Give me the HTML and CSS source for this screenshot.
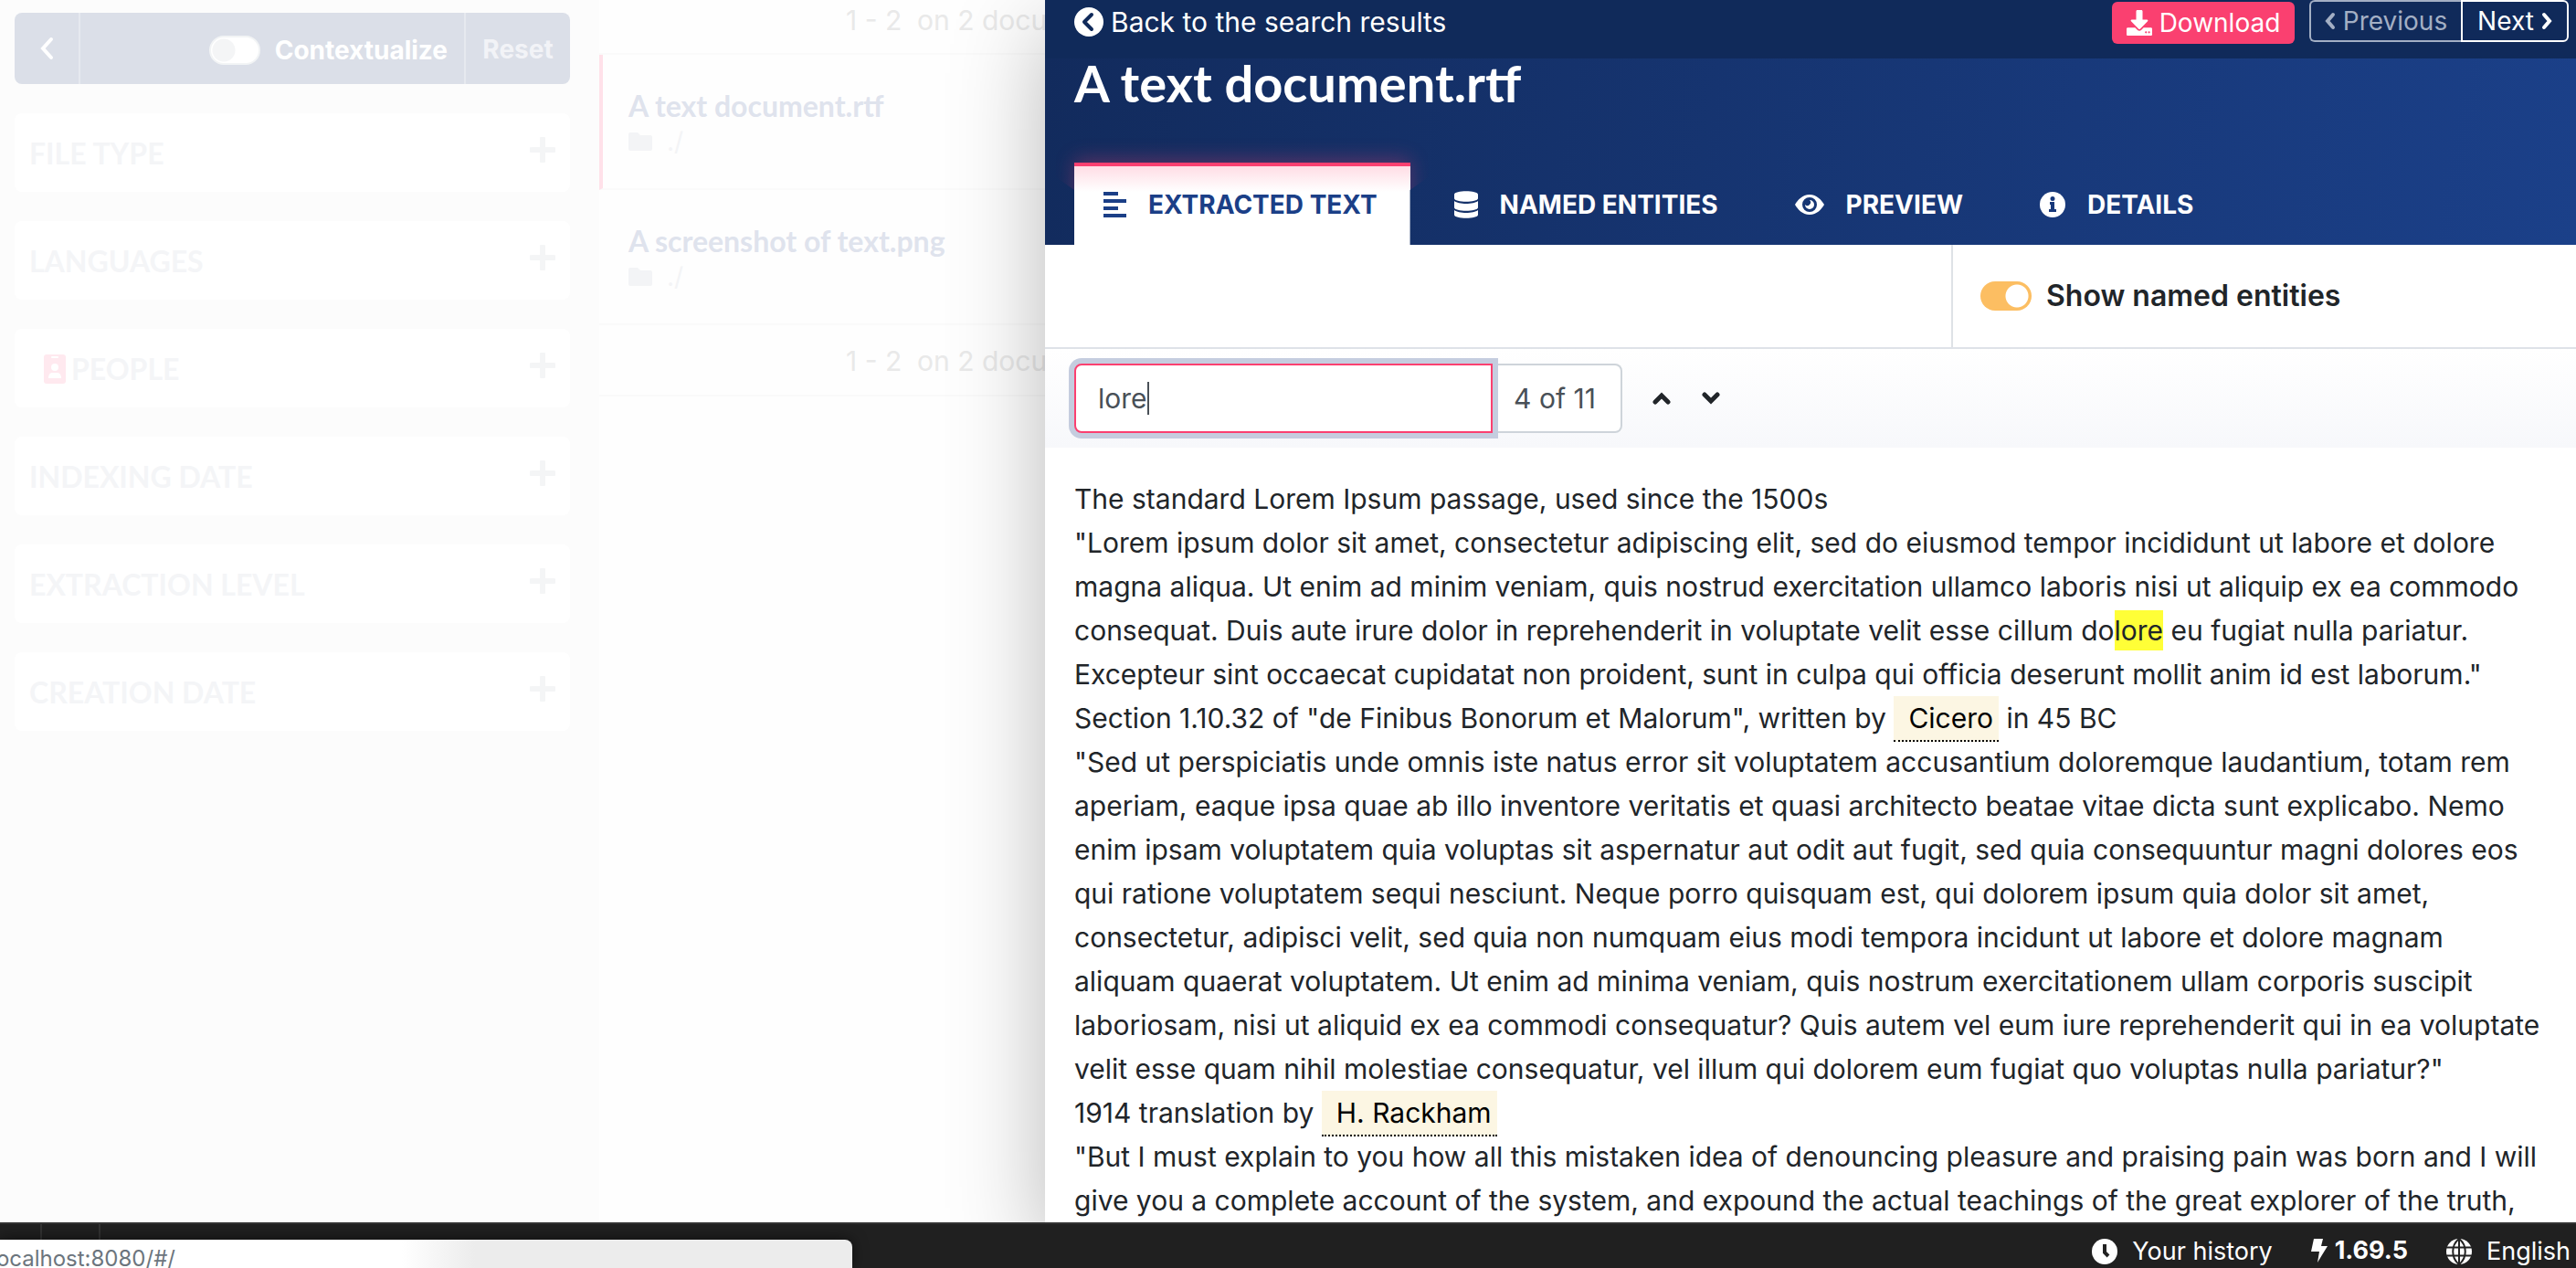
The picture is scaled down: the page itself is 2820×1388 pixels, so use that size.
FILE: index.html
```html
<!DOCTYPE html>
<html lang="en">
<head>
<meta charset="utf-8">
<meta name="viewport" content="width=device-width, initial-scale=1">
<title>A text document.rtf</title>
<link rel="stylesheet" href="styles.css">
</head>
<body>
<div class="workspace">
  <aside class="filters">
    <div class="filters-toolbar">
      <button class="toolbar-back" type="button" aria-label="Hide filters">
        <svg width="16" height="26" viewBox="0 0 16 26"><path d="M13 3 4 13l9 10" fill="none" stroke="currentColor" stroke-width="4" stroke-linecap="round"/></svg>
      </button>
      <label class="toolbar-context"><input type="checkbox" class="switch switch-off">Contextualize</label>
      <button class="toolbar-reset" type="button">Reset</button>
    </div>
    <button class="filter" type="button"><span>FILE TYPE</span><svg class="plus" viewBox="0 0 28 28"><path d="M14 2v24M2 14h24"/></svg></button>
    <button class="filter" type="button"><span>LANGUAGES</span><svg class="plus" viewBox="0 0 28 28"><path d="M14 2v24M2 14h24"/></svg></button>
    <button class="filter" type="button"><span class="filter-people"><svg width="24" height="32" viewBox="0 0 24 32"><rect width="24" height="32" rx="3" fill="#ffe9ef"/><rect x="8" y="2" width="8" height="2" rx="1" fill="#fff"/><circle cx="12" cy="14" r="4" fill="#fff"/><path d="M5 26c0-4 2-6 4-6h6c2 0 4 2 4 6z" fill="#fff"/></svg>PEOPLE</span><svg class="plus" viewBox="0 0 28 28"><path d="M14 2v24M2 14h24"/></svg></button>
    <button class="filter" type="button"><span>INDEXING DATE</span><svg class="plus" viewBox="0 0 28 28"><path d="M14 2v24M2 14h24"/></svg></button>
    <button class="filter" type="button"><span>EXTRACTION LEVEL</span><svg class="plus" viewBox="0 0 28 28"><path d="M14 2v24M2 14h24"/></svg></button>
    <button class="filter" type="button"><span>CREATION DATE</span><svg class="plus" viewBox="0 0 28 28"><path d="M14 2v24M2 14h24"/></svg></button>
  </aside>

  <section class="results">
    <p class="range range-top">1 - 2&nbsp; on 2 documents</p>
    <article class="result result-active">
      <a class="result-title" href="#doc1">A text document.rtf</a>
      <p class="result-path"><svg width="26" height="20" viewBox="0 0 26 20"><path d="M2 0h8l3 3h11a2 2 0 0 1 2 2v13a2 2 0 0 1-2 2H2a2 2 0 0 1-2-2V2a2 2 0 0 1 2-2z" fill="currentColor"/></svg>./</p>
    </article>
    <article class="result">
      <a class="result-title" href="#doc2">A screenshot of text.png</a>
      <p class="result-path"><svg width="26" height="20" viewBox="0 0 26 20"><path d="M2 0h8l3 3h11a2 2 0 0 1 2 2v13a2 2 0 0 1-2 2H2a2 2 0 0 1-2-2V2a2 2 0 0 1 2-2z" fill="currentColor"/></svg>./</p>
    </article>
    <p class="range">1 - 2&nbsp; on 2 documents</p>
  </section>

  <main class="document">
    <nav class="document-nav">
      <a class="back" href="#results">
        <svg width="32" height="32" viewBox="0 0 32 32"><circle cx="16" cy="16" r="16" fill="#fff"/><path d="M19 8l-8 8 8 8" fill="none" stroke="#102a5a" stroke-width="4" stroke-linecap="round" stroke-linejoin="round"/></svg>
        Back to the search results
      </a>
      <div class="nav-actions">
        <button class="download" type="button"><svg width="28" height="28" viewBox="0 0 512 512"><path fill="currentColor" fill-rule="evenodd" d="M216 0h80c13 0 24 11 24 24v168h88c18 0 27 22 14 34L270 378c-8 8-20 8-28 0L90 226c-13-12-4-34 14-34h88V24c0-13 11-24 24-24zM512 376v112c0 13-11 24-24 24H24c-13 0-24-11-24-24V376c0-13 11-24 24-24h147l49 49c20 20 52 20 72 0l49-49h147c13 0 24 11 24 24zM368 444a20 20 0 1 0 40 0 20 20 0 1 0-40 0zM430 444a20 20 0 1 0 40 0 20 20 0 1 0-40 0z"/></svg>Download</button>
        <div class="pager">
          <button class="pager-prev" type="button" disabled><svg width="12" height="20" viewBox="0 0 12 20"><path d="M9 3l-6 7 6 7" fill="none" stroke="currentColor" stroke-width="4" stroke-linecap="round"/></svg>Previous</button>
          <button class="pager-next" type="button">Next<svg width="12" height="20" viewBox="0 0 12 20"><path d="M3 3l6 7-6 7" fill="none" stroke="currentColor" stroke-width="4" stroke-linecap="round"/></svg></button>
        </div>
      </div>
    </nav>

    <header class="document-header">
      <h1>A text document.rtf</h1>
      <div class="tabs">
        <a class="tab tab-active" href="#text"><svg width="25" height="28" viewBox="0 0 25 28"><path fill="currentColor" d="M0 0h16v4H0zM0 8h25v4H0zM0 16h16v4H0zM0 24h25v4H0z"/></svg>EXTRACTED TEXT</a>
        <a class="tab" href="#entities"><svg width="26" height="30" viewBox="0 0 26 30"><path fill="currentColor" d="M0 4c0-5 26-5 26 0v4c0 5-26 5-26 0zM0 11c5 4 21 4 26 0v7c0 5-26 5-26 0zM0 21c5 4 21 4 26 0v5c0 5-26 5-26 0z"/></svg>NAMED ENTITIES</a>
        <a class="tab" href="#preview"><svg width="32" height="24" viewBox="0 0 32 24"><path fill="currentColor" fill-rule="evenodd" d="M16 1C8 1 3 7 0 12c3 5 8 11 16 11s13-6 16-11C29 7 24 1 16 1zm0 3a8 8 0 1 1 0 16 8 8 0 0 1 0-16z"/><path fill="currentColor" d="M16 7a5 5 0 1 1-5 5 3 3 0 0 0 5-5z"/></svg>PREVIEW</a>
        <a class="tab" href="#details"><svg width="28" height="28" viewBox="0 0 28 28"><circle cx="14" cy="14" r="14" fill="currentColor"/><path fill="#17387a" d="M11 11h5v8h2v3h-8v-3h2v-5h-1zM14 5a2.400 2.400 0 1 1 0 5 2.400 2.400 0 0 1 0-5z"/></svg>DETAILS</a>
      </div>
    </header>

    <div class="options">
      <label class="option-entities"><input type="checkbox" class="switch switch-on" checked>Show named entities</label>
    </div>

    <div class="search">
      <div class="search-group">
        <div class="search-field">
          <input class="search-input" type="text" value="lore" aria-label="Find in document">
          <span class="caret"></span>
        </div>
        <span class="search-count">4 of 11</span>
      </div>
      <div class="search-steps">
        <button type="button" aria-label="Previous match"><svg width="22" height="14" viewBox="0 0 22 14"><path d="M4 11l7-7 7 7"/></svg></button>
        <button type="button" aria-label="Next match"><svg width="22" height="14" viewBox="0 0 22 14"><path d="M4 3l7 7 7-7"/></svg></button>
      </div>
    </div>

    <div class="content">
      <p>The standard Lorem Ipsum passage, used since the 1500s</p>
      <p>"Lorem ipsum dolor sit amet, consectetur adipiscing elit, sed do eiusmod tempor incididunt ut labore et dolore<br>
      magna aliqua. Ut enim ad minim veniam, quis nostrud exercitation ullamco laboris nisi ut aliquip ex ea commodo<br>
      consequat. Duis aute irure dolor in reprehenderit in voluptate velit esse cillum do<mark class="match">lore</mark> eu fugiat nulla pariatur.<br>
      Excepteur sint occaecat cupidatat non proident, sunt in culpa qui officia deserunt mollit anim id est laborum."</p>
      <p>Section 1.10.32 of "de Finibus Bonorum et Malorum", written by <mark class="entity">Cicero</mark> in 45 BC</p>
      <p>"Sed ut perspiciatis unde omnis iste natus error sit voluptatem accusantium doloremque laudantium, totam rem<br>
      aperiam, eaque ipsa quae ab illo inventore veritatis et quasi architecto beatae vitae dicta sunt explicabo. Nemo<br>
      enim ipsam voluptatem quia voluptas sit aspernatur aut odit aut fugit, sed quia consequuntur magni dolores eos<br>
      qui ratione voluptatem sequi nesciunt. Neque porro quisquam est, qui dolorem ipsum quia dolor sit amet,<br>
      consectetur, adipisci velit, sed quia non numquam eius modi tempora incidunt ut labore et dolore magnam<br>
      aliquam quaerat voluptatem. Ut enim ad minima veniam, quis nostrum exercitationem ullam corporis suscipit<br>
      laboriosam, nisi ut aliquid ex ea commodi consequatur? Quis autem vel eum iure reprehenderit qui in ea voluptate<br>
      velit esse quam nihil molestiae consequatur, vel illum qui dolorem eum fugiat quo voluptas nulla pariatur?"</p>
      <p>1914 translation by <mark class="entity">H. Rackham</mark></p>
      <p>"But I must explain to you how all this mistaken idea of denouncing pleasure and praising pain was born and I will<br>
      give you a complete account of the system, and expound the actual teachings of the great explorer of the truth,</p>
    </div>
  </main>
</div>

<footer class="footer">
  <div class="footer-rail"><span></span><span></span></div>
  <a class="footer-item" href="#history"><svg width="28" height="28" viewBox="0 0 28 28"><circle cx="14" cy="14" r="14" fill="#fff"/><path d="M14 6v9l4 4" fill="none" stroke="#222" stroke-width="4"/></svg>Your history</a>
  <span class="footer-version"><svg width="18" height="26" viewBox="0 0 18 26"><path fill="#fff" d="M3 0h10l-2 8h7L7 26l2-12H0z"/></svg>1.69.5</span>
  <a class="footer-item footer-language" href="#language"><svg width="28" height="28" viewBox="0 0 28 28"><circle cx="14" cy="14" r="14" fill="#fff"/><path d="M0 9.500h28M0 18.500h28M14 0v28M14 0c-9 7-9 21 0 28M14 0c9 7 9 21 0 28" fill="none" stroke="#222" stroke-width="2"/></svg>English</a>
  <div class="status"><span>localhost:8080/#/</span></div>
</footer>
</body>
</html>
```
FILE: styles.css
```css
* { box-sizing: border-box; }

body {
  margin: 0;
  height: 100vh;
  display: flex;
  flex-direction: column;
  overflow: hidden;
  background: #fff;
  color: #212529;
  font-family: Inter, "Liberation Sans", sans-serif;
  font-size: 30px;
  line-height: 48px;
}

p, h1 { margin: 0; }
a { color: inherit; text-decoration: none; }
svg { flex: none; display: block; }
button { margin: 0; padding: 0; border: 0; background: none; color: inherit; font: inherit; }

.workspace {
  flex: 1;
  min-height: 0;
  display: grid;
  grid-template-columns: 656px 488px 1fr;
}

/* Filters */
.filters {
  display: flex;
  flex-direction: column;
  gap: 32px;
  padding: 14px 32px 0 16px;
  background: #fcfcfc;
}

.filters-toolbar {
  display: flex;
  height: 78px;
  border-radius: 8px;
  background: #dbdfe8;
  color: #fff;
  font-size: 28px;
  font-weight: 700;
}

.toolbar-back {
  display: flex;
  align-items: center;
  justify-content: center;
  width: 72px;
  border-right: 2px solid #e6e9ef;
}

.toolbar-context {
  flex: 1;
  display: flex;
  align-items: center;
  justify-content: flex-end;
  gap: 16px;
  padding: 4px 18px 0 0;
}

.toolbar-reset {
  width: 116px;
  padding-top: 2px;
  border-left: 2px solid #e6e9ef;
  color: #f2f3f7;
}

.switch {
  appearance: none;
  flex: none;
  width: 56px;
  height: 32px;
  margin: 0;
  border-radius: 16px;
}

.switch-off {
  border: 2px solid #f2f4f5;
  background: radial-gradient(circle at 14px 14px, #f4f5f6 12px, #fff 13px);
}

.switch-on { background: radial-gradient(circle at 40px 16px, #fff 12px, #fcbe62 13px); }

.filter {
  display: flex;
  align-items: center;
  justify-content: space-between;
  height: 86px;
  padding: 2px 16px 0;
  border-radius: 8px;
  background: #fff;
  color: #f4f5f7;
  font-family: Lato, sans-serif;
  font-size: 32px;
  font-weight: 700;
}

.filter-people { display: flex; align-items: center; gap: 6px; padding-left: 16px; }

.plus {
  width: 28px;
  height: 28px;
  margin-bottom: 8px;
  fill: none;
  stroke: #f4f5f6;
  stroke-width: 6px;
  stroke-linecap: round;
}

/* Results */
.results { overflow: hidden; white-space: nowrap; background: #fefefe; }

.range {
  height: 78px;
  padding: 15px 0 0 270px;
  border-bottom: 2px solid #fafafa;
  color: #e9e9e9;
}

.range-top { height: 60px; padding-top: 0; line-height: 44px; }

.result {
  height: 148px;
  padding: 32px 32px 0 32px;
  border-bottom: 2px solid #fafafa;
}

.result-active { padding-left: 28px; border-left: 4px solid #ffe1e9; }

.result-title {
  color: #dfe3ed;
  font-family: Lato, sans-serif;
  font-size: 32px;
  font-weight: 700;
}

.result-path {
  display: flex;
  align-items: center;
  gap: 16px;
  color: #f3f4f6;
  font-size: 28px;
  line-height: 28px;
}

/* Document panel */
.document {
  position: relative;
  min-width: 0;
  background: #fff;
  box-shadow: 0 32px 96px rgba(0, 0, 0, .28);
}

.document-nav {
  display: flex;
  justify-content: space-between;
  height: 64px;
  padding: 0 8px 0 32px;
  background: #102a5a;
  color: #fff;
}

.back { display: flex; align-items: center; gap: 8px; height: 48px; }

.nav-actions { display: flex; gap: 16px; font-size: 28px; line-height: 44px; }

.download {
  display: flex;
  align-items: center;
  justify-content: center;
  gap: 8px;
  width: 200px;
  height: 46px;
  margin-top: 2px;
  border-radius: 6px;
  background: #fa4070;
}

.pager { display: flex; height: 46px; }

.pager button {
  display: flex;
  align-items: center;
  justify-content: center;
  gap: 8px;
  border: 2px solid #fff;
}

.pager .pager-prev {
  width: 166px;
  border-color: #a3afc4;
  border-right: 0;
  border-radius: 6px 0 0 6px;
  color: #a3afc4;
}

.pager .pager-next { width: 118px; border-radius: 0 6px 6px 0; }

.document-header {
  display: flex;
  flex-direction: column;
  justify-content: space-between;
  height: 204px;
  padding: 0 32px;
  background: linear-gradient(100deg, #122b5d, #1b4089);
  color: #fff;
}

.document-header h1 {
  font-family: Lato, sans-serif;
  font-size: 56px;
  font-weight: 700;
  line-height: 54px;
}

.tabs { display: flex; gap: 16px; }

.tab {
  display: flex;
  align-items: center;
  gap: 24px;
  height: 90px;
  padding: 0 36px 2px 32px;
  border-top: 4px solid transparent;
  font-size: 28px;
  font-weight: 700;
}

.tab-active {
  border-top-color: #fa4070;
  background: linear-gradient(#ffdde5, #fff 28px);
  box-shadow: 0 -4px 20px rgba(250, 64, 112, .3);
  clip-path: polygon(-20px -30px, calc(100% + 20px) -30px, calc(100% + 20px) 16px, 100% 30px, 100% 100%, 0 100%, 0 30px, -20px 16px);
  color: #1b3f87;
}

.options {
  display: flex;
  justify-content: flex-end;
  height: 114px;
  border-bottom: 2px solid #dee2e8;
}

.option-entities {
  display: flex;
  align-items: center;
  gap: 16px;
  width: 684px;
  padding-left: 30px;
  border-left: 2px solid #dee2e6;
  font-size: 32px;
  font-weight: 600;
}

.search {
  display: flex;
  align-items: center;
  gap: 32px;
  height: 108px;
  padding: 0 32px;
  background: linear-gradient(#fff, #f7f8fb);
}

.search-group { display: flex; width: 600px; height: 76px; color: #495057; }

.search-field { position: relative; width: 458px; }

.search-input {
  width: 100%;
  height: 76px;
  padding: 0 24px;
  border: 2px solid #fa4070;
  border-radius: 8px 0 0 8px;
  outline: 0;
  background: #fff;
  box-shadow: 0 0 0 6px #c5cddf;
  color: #495057;
  font: inherit;
}

.caret {
  position: absolute;
  top: 20px;
  left: 80px;
  width: 2px;
  height: 36px;
  background: #495057;
}

.search-count {
  flex: 1;
  display: flex;
  align-items: center;
  justify-content: center;
  padding-right: 4px;
  border: 2px solid #ced4da;
  border-left: 0;
  border-radius: 0 8px 8px 0;
  background: #fff;
}

.search-steps { display: flex; gap: 32px; }
.search-steps path { fill: none; stroke: #212529; stroke-width: 5px; stroke-linecap: round; }

.content { padding: 32px 0 0 32px; white-space: nowrap; }

.match { background: #ffff37; color: inherit; padding: 4px 0; }

.entity {
  padding: 6px 6px 6px 16px;
  border-bottom: 2px dotted #000;
  background: #fcf6e3;
  color: #000;
}

/* Footer */
.footer {
  position: relative;
  z-index: 1;
  display: flex;
  justify-content: flex-end;
  height: 50px;
  padding: 6px 6px 0 0;
  border-top: 2px solid #333;
  background: #202020;
  color: #fff;
  font-size: 27px;
  line-height: 48px;
}

.footer-item, .footer-version { display: flex; align-items: center; height: 48px; }
.footer-item { gap: 16px; }
.footer-version { gap: 8px; height: 46px; margin: 0 42px; font-weight: 700; }

.footer-rail { display: flex; gap: 62px; margin: -6px auto 0 44px; }
.footer-rail span { width: 2px; background: #333; }

.status {
  position: absolute;
  left: 0;
  bottom: 0;
  display: flex;
  width: 933px;
  height: 31px;
  overflow: hidden;
  border-radius: 0 8px 0 0;
  background: linear-gradient(90deg, #fff 440px, #ececec 520px);
  box-shadow: 0 0 16px rgba(0, 0, 0, .6);
  color: #6c757d;
  font-size: 24px;
  line-height: 42px;
}

.status span { display: flex; justify-content: flex-end; width: 192px; }
```
